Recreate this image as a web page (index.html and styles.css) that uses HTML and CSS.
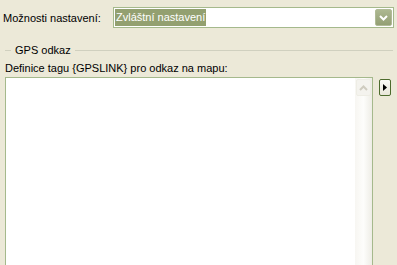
FILE: index.html
```html
<!DOCTYPE html>
<html>
<head>
<meta charset="utf-8">
<link rel="stylesheet" href="styles.css">
</head>
<body>
<div class="panel">
  <div class="row-options">
    <span class="label">Možnosti nastavení:</span>
    <div class="combo">
      <span class="combo-text"><span class="sel">Zvláštní nastavení</span></span>
      <span class="combo-btn">
        <svg width="9" height="6" viewBox="0 0 9 6"><path d="M1 1 L4.5 4.5 L8 1" fill="none" stroke="#fff" stroke-width="2"/></svg>
      </span>
    </div>
  </div>
  <div class="group-head">
    <span class="line short"></span>
    <span class="group-title">GPS odkaz</span>
    <span class="line long"></span>
  </div>
  <div class="def-label">Definice tagu {GPSLINK} pro odkaz na mapu:</div>
  <div class="edit-row">
    <div class="textarea">
      <div class="text-body"></div>
      <div class="vscroll">
        <div class="sb-up">
          <svg width="9" height="6" viewBox="0 0 9 6"><path d="M1 5 L4.5 1.5 L8 5" fill="none" stroke="#cfccc0" stroke-width="2"/></svg>
        </div>
        <div class="sb-track"></div>
      </div>
    </div>
    <div class="side-btn">
      <svg width="4" height="7" viewBox="0 0 4 7"><path d="M0 0 L4 3.5 L0 7 Z" fill="#000"/></svg>
    </div>
  </div>
</div>
</body>
</html>
```
FILE: styles.css
```css
html, body {
  margin: 0;
  padding: 0;
  background: #ece9d8;
  overflow: hidden;
}
body {
  font-family: "Liberation Sans", Arial, sans-serif;
  font-size: 11px;
  color: #000;
  width: 397px;
  height: 265px;
}
.panel {
  display: flex;
  flex-direction: column;
  height: 265px;
}
.row-options {
  display: flex;
  align-items: center;
  padding-top: 7px;
  height: 21px;
}
.label {
  width: 110px;
  padding-left: 3px;
}
.combo {
  width: 279px;
  height: 19px;
  border: 1px solid #a5b98c;
  background: #fff;
  display: flex;
  align-items: center;
  justify-content: space-between;
}
.combo-text {
  padding-left: 1px;
  display: flex;
  align-items: center;
}
.sel {
  background: #93a070;
  color: #fff;
  padding: 2px 1px 2px 1px;
  line-height: 13px;
}
.combo-btn {
  width: 15px;
  height: 15px;
  margin-right: 1px;
  border: 1px solid #b0bb96;
  border-radius: 2px;
  background: linear-gradient(#adb891, #939f74);
  display: flex;
  align-items: center;
  justify-content: center;
}
.group-head {
  display: flex;
  align-items: center;
  margin-top: 16px;
  height: 12px;
  padding-left: 5px;
  padding-right: 4px;
}
.line {
  height: 1px;
  background: #d0d0bf;
}
.line.short { width: 6px; }
.line.long { flex: 1; }
.group-title {
  padding: 0 4px 0 4px;
  line-height: 12px;
}
.def-label {
  margin-top: 6px;
  padding-left: 5px;
  line-height: 13px;
}
.edit-row {
  flex: 1;
  min-height: 0;
  display: flex;
  align-items: stretch;
  margin-top: 2px;
  padding-left: 5px;
}
.textarea {
  width: 366px;
  border: 1px solid #a5b98c;
  border-bottom: none;
  background: #fff;
  display: flex;
}
.text-body { flex: 1; }
.vscroll {
  width: 17px;
  display: flex;
  flex-direction: column;
  background: linear-gradient(to right, #f7f6f2, #fdfdfb 50%, #eeede6);
}
.sb-up {
  height: 15px;
  margin: 1px 1px 0 1px;
  border: 1px solid #eeede5;
  border-radius: 2px;
  background: #f4f3ee;
  display: flex;
  align-items: center;
  justify-content: center;
}
.sb-track { flex: 1; }
.side-btn {
  align-self: flex-start;
  margin-left: 6px;
  margin-top: 2px;
  width: 10px;
  height: 15px;
  border: 1px solid #4d6b2d;
  border-radius: 2px;
  background: linear-gradient(#fbfbf7, #e8e6d8);
  display: flex;
  align-items: center;
  justify-content: center;
}
```
